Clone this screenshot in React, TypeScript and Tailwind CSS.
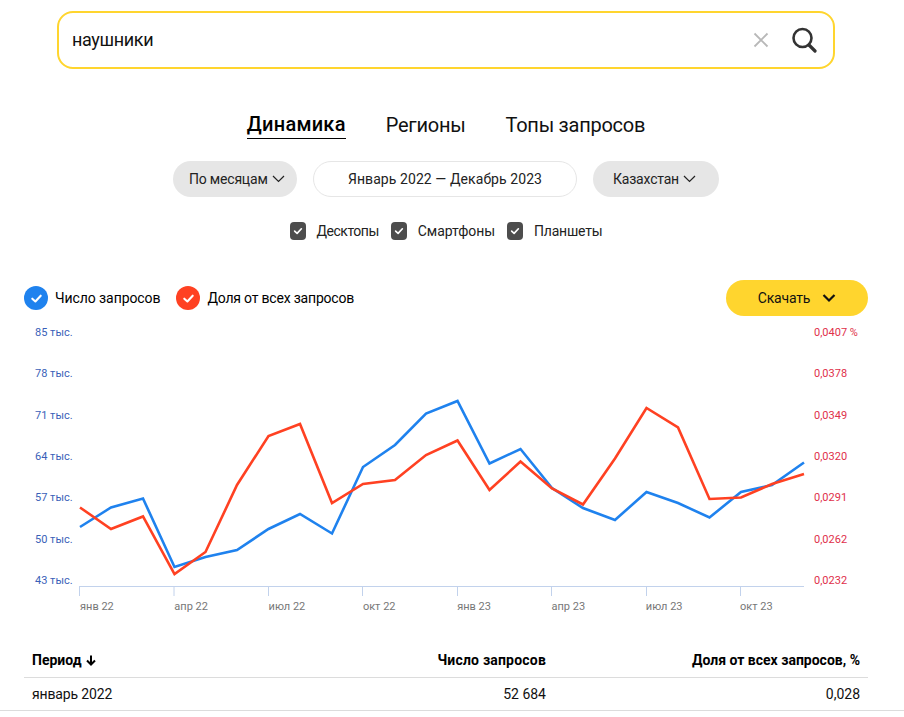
import React from 'react';

const X = [80, 111, 143, 174.5, 205.5, 237, 268.5, 300, 332, 363, 395, 426, 457.5, 489.5, 520.5, 552, 583, 615, 646.5, 678, 709.5, 741, 772, 804];
const BLUE = [527, 507.5, 498.5, 567, 557, 550, 529, 514, 533.5, 467, 445, 413.5, 401, 463.5, 449, 488, 508, 520, 492, 503, 517.5, 492, 485, 462.5];
const RED = [507.5, 529, 516.5, 574, 552, 485, 436, 424, 503, 484, 480, 455, 440.5, 490, 461.5, 488.5, 504.5, 458.5, 408, 427.5, 499, 497.5, 484, 474];
const TICKS = [79.5, 174, 268.5, 362.5, 457.5, 551.5, 646.5, 740.5];

const LEFT_LABELS = ['85 тыс.', '78 тыс.', '71 тыс.', '64 тыс.', '57 тыс.', '50 тыс.', '43 тыс.'];
const RIGHT_LABELS = ['0,0407 %', '0,0378', '0,0349', '0,0320', '0,0291', '0,0262', '0,0232'];
const MONTHS = ['янв 22', 'апр 22', 'июл 22', 'окт 22', 'янв 23', 'апр 23', 'июл 23', 'окт 23'];

const points = (ys: number[]) => ys.map((y, i) => `${X[i]},${y}`).join(' ');

function Check({ className }: { className: string }) {
    return (
        <svg viewBox="0 0 16 16" className={className} fill="none" stroke="white" strokeWidth="2.2" strokeLinecap="round" strokeLinejoin="round">
            <path d="M3.5 8.2 L6.8 11.2 L12.5 5" />
        </svg>
    );
}

function Chevron() {
    return (
        <svg viewBox="0 0 13 8" className="ml-[4px] h-[8px] w-[13px]" fill="none" stroke="#222" strokeWidth="1.2">
            <path d="M1 1 L6.5 6.5 L12 1" />
        </svg>
    );
}

function DeviceCheck({ label, track }: { label: string; track: string }) {
    return (
        <div className="flex items-center">
            <span className="flex h-[18px] w-[16px] items-center justify-center rounded-[4px] bg-[#4d4d4d]">
                <Check className="h-[12px] w-[12px]" />
            </span>
            <span className={`ml-[11px] text-[14px] leading-[18px] text-[#222] ${track}`}>{label}</span>
        </div>
    );
}

function LegendItem({ label, color, track }: { label: string; color: string; track: string }) {
    return (
        <div className="flex items-center">
            <span className={`flex h-[24px] w-[24px] items-center justify-center rounded-full ${color}`}>
                <Check className="h-[15px] w-[15px]" />
            </span>
            <span className={`ml-[7px] text-[14px] leading-[18px] text-black ${track}`}>{label}</span>
        </div>
    );
}

export default function App() {
    return (
        <div className="h-[717px] w-[904px] overflow-hidden bg-white font-['Roboto',sans-serif]">
            <div className="ml-[57px] mt-[11px] flex h-[58px] w-[778px] items-center rounded-[16px] border-2 border-[#ffd52e] pl-[13px] pr-[16px]">
                <span className="flex-1 pb-[2px] text-[18px] tracking-[-0.35px] text-[#111]">наушники</span>
                <svg viewBox="0 0 16 16" className="mr-[22px] h-[16px] w-[16px]" fill="none" stroke="#b8b8b8" strokeWidth="1.8">
                    <path d="M1.5 1.5 L14.5 14.5 M14.5 1.5 L1.5 14.5" />
                </svg>
                <svg viewBox="0 0 26 26" className="h-[26px] w-[26px]" fill="none" stroke="#333" strokeWidth="2.6" strokeLinecap="round">
                    <circle cx="11.5" cy="11" r="9" />
                    <path d="M18 18 L24 24" strokeWidth="3.2" />
                </svg>
            </div>

            <div className="ml-[24px] w-[844px]">
                <div className="mt-[42px] flex h-[28px] justify-center gap-[40px] text-[20px] leading-[28px] tracking-[-0.25px] text-[#111]">
                    <span className="border-b border-black font-medium leading-[27px] tracking-[0.25px] text-black">Динамика</span>
                    <span>Регионы</span>
                    <span>Топы запросов</span>
                </div>

                <div className="mt-[22px] flex h-[36px] justify-center gap-[16px] text-[14px] text-[#222]">
                    <div className="flex w-[124px] items-center rounded-full bg-[#e6e6e6] pl-[16px] tracking-[-0.2px]">
                        По месяцам <Chevron />
                    </div>
                    <div className="flex w-[264px] items-center justify-center rounded-full border border-[#e6e6e6] tracking-[0.08px]">
                        Январь 2022 — Декабрь 2023
                    </div>
                    <div className="flex w-[126px] items-center rounded-full bg-[#e6e6e6] pl-[20px] tracking-[-0.2px]">
                        Казахстан <Chevron />
                    </div>
                </div>

                <div className="mt-[25px] flex h-[18px] justify-center gap-[12px]">
                    <DeviceCheck label="Десктопы" track="tracking-[-0.5px]" />
                    <DeviceCheck label="Смартфоны" track="tracking-[-0.05px]" />
                    <DeviceCheck label="Планшеты" track="tracking-[-0.2px]" />
                </div>

                <div className="mt-[40px] flex h-[36px] items-center">
                    <LegendItem label="Число запросов" color="bg-[#1f82ee]" track="tracking-[-0.08px]" />
                    <div className="ml-[16px]">
                        <LegendItem label="Доля от всех запросов" color="bg-[#ff4122]" track="-ml-px tracking-[-0.2px]" />
                    </div>
                    <button className="ml-auto flex h-[36px] w-[142px] items-center justify-center gap-[12px] rounded-full bg-[#ffd52e] text-[14px] tracking-[-0.2px] text-[#111]">
                        Скачать
                        <svg viewBox="0 0 14 10" className="h-[10px] w-[14px]" fill="none" stroke="#111" strokeWidth="2.2">
                            <path d="M1.5 2 L7 7.5 L12.5 2" />
                        </svg>
                    </button>
                </div>
            </div>

            <div className="mt-[9px] flex">
                <div className="flex h-[263px] w-[79px] flex-col justify-between pl-[35px] pt-[1px] text-[11px] leading-[14px] text-[#3a5fb8]">
                    {LEFT_LABELS.map(l => <span key={l}>{l}</span>)}
                </div>
                <svg viewBox="79 325 726 271" className="h-[271px] w-[726px]" fill="none">
                    <path d="M79 586.5 H804" stroke="#c2d2ec" strokeWidth="1" />
                    {TICKS.map(x => <path key={x} d={`M${x} 587 V596`} stroke="#c2d2ec" strokeWidth="1" />)}
                    <polyline points={points(BLUE)} stroke="#1f82ee" strokeWidth="2.6" strokeLinejoin="miter" />
                    <polyline points={points(RED)} stroke="#ff4122" strokeWidth="2.6" strokeLinejoin="miter" />
                </svg>
                <div className="ml-[9px] flex h-[263px] flex-col justify-between pt-[1px] text-[11px] leading-[14px] text-[#e0304a]">
                    {RIGHT_LABELS.map(l => <span key={l}>{l}</span>)}
                </div>
            </div>

            <div className="ml-[80px] mt-[4px] grid h-[14px] grid-cols-[94.3px_94.3px_94.3px_94.3px_94.3px_94.3px_94.3px_94.3px] text-[11px] leading-[14px] text-[#777]">
                {MONTHS.map(m => <span key={m}>{m}</span>)}
            </div>

            <div className="ml-[24px] mt-[30px] grid h-[34px] w-[844px] grid-cols-[200px_314px_314px] items-center border-b border-[#dcdcdc] px-[8px] text-[14px] font-bold text-black">
                <span className="flex items-center gap-[4px]">
                    Период
                    <svg viewBox="0 0 10 11" className="h-[11px] w-[10px]" fill="none" stroke="black" strokeWidth="2">
                        <path d="M5 0.5 V9 M1 5.5 L5 9.5 L9 5.5" />
                    </svg>
                </span>
                <span className="text-right tracking-[0.2px]">Число запросов</span>
                <span className="text-right">Доля от всех запросов, %</span>
            </div>
            <div className="h-[33px] border-b border-[#dcdcdc]">
                <div className="ml-[24px] grid h-full w-[844px] grid-cols-[200px_314px_314px] items-center px-[8px] text-[14px] text-[#111]">
                    <span className="tracking-[-0.15px]">январь 2022</span>
                    <span className="text-right">52 684</span>
                    <span className="text-right">0,028</span>
                </div>
            </div>
        </div>
    );
}
